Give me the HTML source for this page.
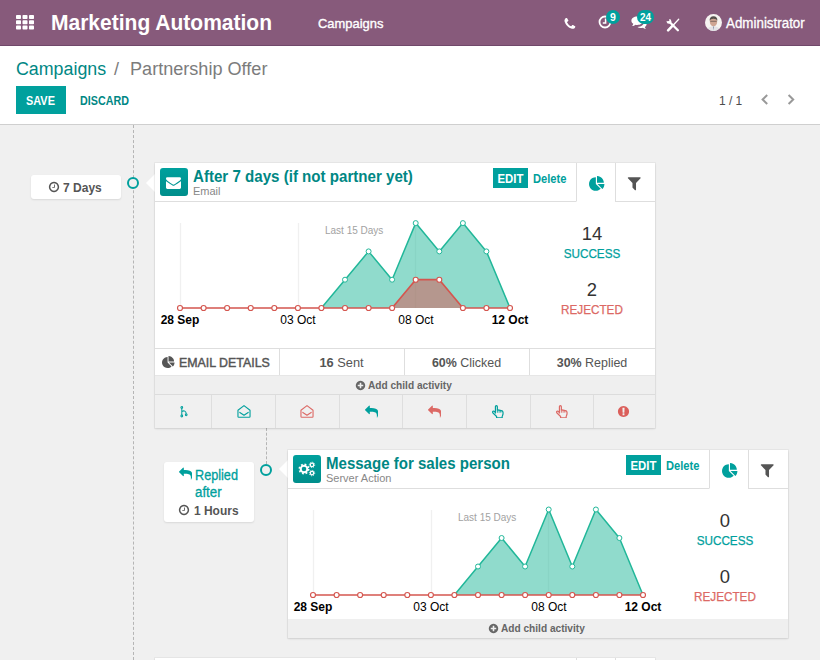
<!DOCTYPE html>
<html lang="en">
<head>
<meta charset="utf-8">
<title>Marketing Automation</title>
<style>
*{box-sizing:border-box;margin:0;padding:0}
html,body{width:820px;height:660px;overflow:hidden}
body{position:relative;background:#f0f0f0;font-family:"Liberation Sans",sans-serif;color:#4c4c4c;font-size:13px}
.abs{position:absolute}
.t{position:absolute;white-space:nowrap;line-height:1}
#nav{position:absolute;left:0;top:0;width:820px;height:46px;background:#875a7b;border-bottom:1px solid #70486a}
#cp{position:absolute;left:0;top:46px;width:820px;height:79px;background:#fff;border-bottom:1px solid #cfcfcf}
.card{position:absolute;background:#fff;box-shadow:0 0 0 1px rgba(0,0,0,.035),0 1px 2px rgba(0,0,0,.11)}
.hdr{position:absolute;left:0;top:0;height:39px;border-bottom:1px solid #dedede;background:#fff}
.ibox{position:absolute;left:5px;top:5px;width:28px;height:28px;border-radius:3px;background:linear-gradient(#00a09d,#008e8b)}
.tab{position:absolute;top:0;height:39px;border-left:1px solid #dedede;border-bottom:1px solid #dedede;background:#fff}
.tab.on{border-bottom-color:#fff}
.edit{position:absolute;background:#00a09d;height:20px}
.pill{position:absolute;background:#fff;border-radius:3px;box-shadow:0 1px 2px rgba(0,0,0,.10)}
.vdash{position:absolute;width:0;border-left:1px dashed #b5b5b5}
.dot{position:absolute;width:12px;height:12px;border-radius:50%;border:2px solid #00a09d;background:#f0f0f0}
.grey{background:#efefef}
.cell{position:absolute;top:0;height:100%;border-left:1px solid #dedede}
.badge{position:absolute;background:#00a09d;border-radius:7px;height:14px}
</style>
</head>
<body>

<div id="nav">
  <svg class="abs" style="left:16px;top:15px" width="18" height="15" viewBox="0 0 18 15"><g fill="#fff"><rect x="0" y="0" width="5" height="4" rx=".8"/><rect x="6.5" y="0" width="5" height="4" rx=".8"/><rect x="13" y="0" width="5" height="4" rx=".8"/><rect x="0" y="5.3" width="5" height="4" rx=".8"/><rect x="6.5" y="5.3" width="5" height="4" rx=".8"/><rect x="13" y="5.3" width="5" height="4" rx=".8"/><rect x="0" y="10.6" width="5" height="4" rx=".8"/><rect x="6.5" y="10.6" width="5" height="4" rx=".8"/><rect x="13" y="10.6" width="5" height="4" rx=".8"/></g></svg>
  <div class="t " id="brand" style="left:51px;top:12px;font-size:22px;color:#fff;font-weight:bold;transform:scaleX(0.955);transform-origin:0 50%">Marketing Automation</div>
  <div class="t " id="menu1" style="left:318px;top:16.5px;font-size:13px;color:#fff;transform:scaleX(0.995);transform-origin:0 50%;-webkit-text-stroke:.35px #fff">Campaigns</div>
  <svg class="abs" style="left:563px;top:16.5px" width="13.8" height="13.8" viewBox="0 0 1792 1792"><path fill="#fff" d="M1600 1240q0 27-10 70.500t-21 68.500q-21 50-122 106-94 51-186 51-27 0-52.500-3.500t-57.500-12.500-47.500-14.500-55.500-20.500-49-18q-98-35-175-83-128-79-264.500-215.500t-215.500-264.500q-48-77-83-175-3-9-18-49t-20.500-55.500-14.500-47.500-12.500-57.500-3.500-52.500q0-92 51-186 56-101 106-122 25-11 68.500-21t70.500-10q14 0 21 3 18 6 53 76 11 19 30 54t35 63.500 31 53.500q3 4 17.500 25t21.500 35.500 7 28.500q0 20-28.500 50t-62 55-62 53-28.500 46q0 9 5 22.500t8.500 20.500 14 24 11.500 19q76 137 174 235t235 174q2 1 19 11.500t24 14 20.500 8.500 22.500 5q18 0 46-28.500t53-62 55-62 50-28.500q14 0 28.500 7t35.500 21.500 25 17.500q25 15 53.500 31t63.500 35 54 30q70 35 76 53 3 7 3 21z"/></svg>
  <svg class="abs" style="left:598px;top:15px" width="14" height="14" viewBox="0 0 14 14"><circle cx="7" cy="7" r="5.500" fill="none" stroke="#fff" stroke-width="1.800"/><path d="M7.600 3.600V8.100H4.800" fill="none" stroke="#fff" stroke-width="1.500"/></svg>
  <div class="badge" style="left:606px;top:10px;width:14px"></div>
  <div class="t " id="b9" style="left:606px;top:12px;font-size:10.5px;color:#fff;font-weight:bold;width:14px;text-align:center">9</div>
  <svg class="abs" style="left:631px;top:16px" width="16" height="13" viewBox="0 0 16 13"><g fill="#fff"><path d="M6.200 0.500C9.600 0.500 12 2.300 12 4.700S9.600 8.900 6.200 8.900C5.600 8.900 5 8.800 4.500 8.700C3.600 9.500 2.400 10 1.100 10C1.700 9.400 2.100 8.700 2.300 7.800C1.100 7 0.400 5.900 0.400 4.700C0.400 2.300 2.800 0.500 6.200 0.500Z"/><path d="M13.200 5.200C14.600 5.900 15.600 7 15.600 8.300C15.600 9.400 14.900 10.400 13.800 11.100C14 11.800 14.400 12.400 14.900 12.900C13.700 12.900 12.600 12.500 11.800 11.800C11.300 11.900 10.800 12 10.200 12C8.700 12 7.400 11.600 6.500 10.900C10.500 10.800 13.300 8.400 13.200 5.200Z"/></g></svg>
  <div class="badge" style="left:637px;top:10px;width:17px"></div>
  <div class="t " id="b24" style="left:637px;top:12px;font-size:10.5px;color:#fff;font-weight:bold;width:17px;text-align:center;transform:scaleX(0.95);transform-origin:50% 50%">24</div>
  <svg class="abs" style="left:666px;top:18px" width="14" height="14" viewBox="0 0 14 14"><g stroke="#fff" fill="none"><path d="M3.800 4.300L11.900 12.200" stroke-width="2.300" stroke-linecap="round"/><path d="M12.700 1.300L7.600 6.700" stroke-width="1.300" stroke-linecap="round"/><path d="M7.100 7.200L2.100 12.300" stroke-width="2.500" stroke-linecap="round"/></g><circle cx="3" cy="3.400" r="2.400" fill="#fff"/><path d="M0 0L3.200 0.400L3.300 3.100L0.400 3.200Z" fill="#875a7b"/></svg>
  <svg class="abs" style="left:705px;top:14px" width="17" height="17" viewBox="0 0 17 17"><circle cx="8.500" cy="8.500" r="8.500" fill="#f6f3f1"/><path d="M2.800 14.800Q4 12.200 8.500 12.200Q13 12.200 14.200 14.800Q11.800 17 8.500 17Q5.200 17 2.800 14.800Z" fill="#e4e2e6"/><ellipse cx="8.500" cy="7.700" rx="3.700" ry="4.600" fill="#cfa593"/><path d="M4.600 6.800Q4.500 2.200 8.500 2.200Q12.500 2.200 12.400 6.800Q11.300 4.600 8.500 4.700Q5.700 4.600 4.600 6.800Z" fill="#56504c"/><path d="M5.300 7.300H11.700" stroke="#6b5a55" stroke-width=".8" fill="none"/><path d="M7.900 12.600L8.500 16.400L9.100 12.600Z" fill="#8a93a8"/></svg>
  <div class="t " id="adm" style="left:726px;top:16px;font-size:14px;color:#fff;transform:scaleX(0.955);transform-origin:0 50%;-webkit-text-stroke:.3px #fff">Administrator</div>
</div>
<div id="cp">
  <div class="t " id="bc1" style="left:16px;top:14px;font-size:18px;color:#008784;transform:scaleX(0.99);transform-origin:0 50%">Campaigns</div>
  <div class="t " id="bcs" style="left:114px;top:14px;font-size:18px;color:#7c7c7c">/</div>
  <div class="t " id="bc2" style="left:130px;top:14px;font-size:18px;color:#7c7c7c;transform:scaleX(1.005);transform-origin:0 50%">Partnership Offer</div>
  <div class="abs" style="left:16px;top:40px;width:50px;height:28px;background:#00a09d"></div>
  <div class="t " id="save" style="left:26px;top:49px;font-size:12px;color:#fff;font-weight:bold;transform:scaleX(0.91);transform-origin:0 50%">SAVE</div>
  <div class="t " id="disc" style="left:80px;top:49px;font-size:12px;color:#008784;font-weight:bold;transform:scaleX(0.895);transform-origin:0 50%">DISCARD</div>
  <div class="t " id="pager" style="left:719px;top:48px;font-size:13px;color:#4c4c4c;transform:scaleX(0.92);transform-origin:0 50%">1 / 1</div>
  <svg class="abs" style="left:761px;top:48px" width="8" height="11" viewBox="0 0 8 11"><path d="M6.200 1L1.600 5.500L6.200 10" fill="none" stroke="#999" stroke-width="2"/></svg><svg class="abs" style="left:787px;top:48px" width="8" height="11" viewBox="0 0 8 11"><path d="M1.600 1L6.200 5.500L1.600 10" fill="none" stroke="#999" stroke-width="2"/></svg>
</div>

<div class="vdash" style="left:133px;top:125px;height:535px"></div>
<div class="vdash" style="left:266px;top:428px;height:36px"></div>

<div class="pill" style="left:31px;top:175px;width:90px;height:24px"></div>
<svg class="abs" style="left:48px;top:181px" width="12" height="12" viewBox="0 0 1792 1792"><path fill="#555" d="M1024 544v448q0 14-9 23t-23 9h-320q-14 0-23-9t-9-23v-64q0-14 9-23t23-9h224v-352q0-14 9-23t23-9h64q14 0 23 9t9 23zm416 352q0-148-73-273t-198-198-273-73-273 73-198 198-73 273 73 273 198 198 273 73 273-73 198-198 73-273zm224 0q0 209-103 385.500t-279.500 279.500-385.500 103-385.500-103-279.500-279.500-103-385.500 103-385.500 279.500-279.500 385.500-103 385.500 103 279.500 279.500 103 385.500z"/></svg>
<div class="t " id="d7" style="left:63px;top:181px;font-size:13px;color:#555;font-weight:bold;transform:scaleX(0.925);transform-origin:0 50%">7 Days</div>
<div class="dot" style="left:127px;top:177px"></div>
<svg class="abs" style="left:146px;top:173px" width="10" height="20" viewBox="0 0 10 20"><path d="M10 0L0 10L10 20Z" fill="#fff"/></svg>

<div class="card" id="c1" style="left:155px;top:163px;width:500px;height:265px">

  <div class="hdr" style="width:421px"></div>
  <div class="ibox"><svg class="abs" style="left:6px;top:6.7px" width="15" height="15" viewBox="0 0 1792 1792"><path fill="#fff" d="M1792 710v794q0 66-47 113t-113 47h-1472q-66 0-113-47t-47-113v-794q44 49 101 87 362 246 497 345 57 42 92.500 65.500t94.500 48 110 24.500h2q51 0 110-24.500t94.500-48 92.500-65.500q170-123 498-345 57-39 100-87zm0-294q0 79-49 151t-122 123q-376 261-468 325-10 7-42.500 30.500t-54 38-52 32.500-57.500 27-50 9h-2q-23 0-50-9t-57.500-27-52-32.500-54-38-42.500-30.500q-91-64-262-182.500t-205-142.500q-62-42-117-115.500t-55-136.500q0-78 41.500-130t118.500-52h1472q65 0 112.500 47t47.500 113z"/></svg></div>
  <div class="t ttl" style="left:38px;top:6px;font-size:16px;color:#008784;font-weight:bold;transform:scaleX(0.944);transform-origin:0 50%">After 7 days (if not partner yet)</div>
  <div class="t sub" style="left:38px;top:23px;font-size:11px;color:#888">Email</div>
  <div class="edit" style="left:338px;top:5px;width:35px"></div>
  <div class="t ed" style="left:338px;top:10px;font-size:12px;color:#fff;font-weight:bold;width:35px;text-align:center;transform:scaleX(0.95);transform-origin:50% 50%">EDIT</div>
  <div class="t del" style="left:378px;top:10px;font-size:12px;color:#00a09d;font-weight:bold;transform:scaleX(0.93);transform-origin:0 50%">Delete</div>
  <div class="tab on" style="left:421px;width:40px"><svg class="abs" style="left:11.8px;top:12.7px" width="16" height="16" viewBox="0 0 1792 1792"><path fill="#00a09d" d="M768 890l546 546q-106 108-247.500 168t-298.500 60q-209 0-385.500-103t-279.500-279.500-103-385.500 103-385.500 279.500-279.500 385.500-103v762zm187 6h773q0 157-60 298.500t-168 247.500zm709-128h-768v-768q209 0 385.500 103t279.500 279.500 103 385.500z"/></svg></div>
  <div class="tab" style="left:460px;width:40px"><svg class="abs" style="left:10px;top:12px" width="16.5" height="16.5" viewBox="0 0 1792 1792"><path fill="#555" d="M1595 295q17 41-14 70l-493 493v742q0 42-39 59-13 5-25 5-27 0-45-19l-256-256q-19-19-19-45v-486l-493-493q-31-29-14-70 17-39 59-39h1280q42 0 59 39z"/></svg></div>
  <svg class="abs" style="left:0;top:0" width="400" height="186" viewBox="0 0 400 186">
    <g stroke="#f0f0f0" stroke-width="1.300"><line x1="25.500" y1="60" x2="25.500" y2="145"/><line x1="143.500" y1="60" x2="143.500" y2="145"/><line x1="260.500" y1="60" x2="260.500" y2="145"/></g>
    <polygon points="25,145 166.400,145 190,116.700 213.600,88.400 237.100,116.700 260.700,60.100 284.300,88.400 307.900,60.100 331.400,88.400 355,145" fill="#21b799" fill-opacity=".5"/>
<polyline points="166.400,145 190,116.700 213.600,88.400 237.100,116.700 260.700,60.100 284.300,88.400 307.900,60.100 331.400,88.400 355,145" fill="none" stroke="#21b799" stroke-width="1.500" stroke-linejoin="round"/>
<polygon points="237.100,145 260.700,116.700 284.300,116.700 307.900,145" fill="#d9534f" fill-opacity=".5"/>
<polyline points="25,145 237.100,145 260.700,116.700 284.300,116.700 307.900,145 355,145" fill="none" stroke="#d4564f" stroke-width="1.700" stroke-linejoin="round"/>
<g fill="#fff" stroke="#21b799" stroke-width="1"><circle cx="190" cy="116.700" r="2.500"/><circle cx="213.600" cy="88.400" r="2.500"/><circle cx="237.100" cy="116.700" r="2.500"/><circle cx="260.700" cy="60.100" r="2.500"/><circle cx="284.300" cy="88.400" r="2.500"/><circle cx="307.900" cy="60.100" r="2.500"/><circle cx="331.400" cy="88.400" r="2.500"/></g>
<g fill="#fff" stroke="#d4564f" stroke-width="1.150"><circle cx="25.0" cy="145" r="2.500"/><circle cx="48.6" cy="145" r="2.500"/><circle cx="72.1" cy="145" r="2.500"/><circle cx="95.7" cy="145" r="2.500"/><circle cx="119.3" cy="145" r="2.500"/><circle cx="142.9" cy="145" r="2.500"/><circle cx="166.4" cy="145" r="2.500"/><circle cx="190.0" cy="145" r="2.500"/><circle cx="213.6" cy="145" r="2.500"/><circle cx="237.1" cy="145" r="2.500"/><circle cx="260.7" cy="116.7" r="2.500"/><circle cx="284.3" cy="116.7" r="2.500"/><circle cx="307.9" cy="145" r="2.500"/><circle cx="331.4" cy="145" r="2.500"/><circle cx="355.0" cy="145" r="2.500"/></g>
    <text x="170" y="71" font-family="Liberation Sans, sans-serif" font-size="10" fill="#a2a2a2">Last 15 Days</text>
    <g font-family="Liberation Sans, sans-serif" font-size="12" fill="#000">
      <text x="25" y="161" text-anchor="middle" font-weight="bold">28 Sep</text>
      <text x="143" y="161" text-anchor="middle">03 Oct</text>
      <text x="261" y="161" text-anchor="middle">08 Oct</text>
      <text x="355" y="161" text-anchor="middle" font-weight="bold">12 Oct</text>
    </g>
  </svg>
  <div class="t num" style="left:387px;top:61px;font-size:19px;color:#333;width:100px;text-align:center;transform:scaleX(0.97);transform-origin:50% 50%">14</div>
  <div class="t lab" style="left:387px;top:84px;font-size:13px;color:#00a09d;width:100px;text-align:center;transform:scaleX(0.9);transform-origin:50% 50%;-webkit-text-stroke:.25px #00a09d">SUCCESS</div>
  <div class="t num" style="left:387px;top:117px;font-size:19px;color:#333;width:100px;text-align:center;transform:scaleX(0.97);transform-origin:50% 50%">2</div>
  <div class="t lab" style="left:387px;top:140px;font-size:13px;color:#dc6965;width:100px;text-align:center;transform:scaleX(0.9);transform-origin:50% 50%;-webkit-text-stroke:.25px #dc6965">REJECTED</div>

  <div class="abs" style="left:0;top:185px;width:500px;height:28px;border-top:1px solid #dedede;border-bottom:1px solid #e6e6e6">
    <div class="cell" style="left:124px"></div><div class="cell" style="left:249px"></div><div class="cell" style="left:374px"></div>
    <svg class="abs" style="left:7.3px;top:6.8px" width="13" height="13" viewBox="0 0 1792 1792"><path fill="#555" d="M768 890l546 546q-106 108-247.500 168t-298.500 60q-209 0-385.500-103t-279.500-279.500-103-385.500 103-385.500 279.500-279.500 385.500-103v762zm187 6h773q0 157-60 298.500t-168 247.500zm709-128h-768v-768q209 0 385.500 103t279.500 279.500 103 385.500z"/></svg>
    <div class="t " id="ed" style="left:24px;top:7px;font-size:13px;color:#555;transform:scaleX(0.952);transform-origin:0 50%;-webkit-text-stroke:.45px #555">EMAIL DETAILS</div>
    <div class="t st" style="left:124px;top:7px;font-size:13px;color:#555;width:125px;text-align:center;transform:scaleX(0.985);transform-origin:50% 50%"><b>16</b> Sent</div>
    <div class="t st" style="left:249px;top:7px;font-size:13px;color:#555;width:125px;text-align:center;transform:scaleX(0.957);transform-origin:50% 50%"><b>60%</b> Clicked</div>
    <div class="t st" style="left:374px;top:7px;font-size:13px;color:#555;width:126px;text-align:center;transform:scaleX(0.957);transform-origin:50% 50%"><b>30%</b> Replied</div>
  </div>
  <div class="abs grey" style="left:0;top:213px;width:500px;height:19px">
    <svg class="abs" style="left:200px;top:4px" width="11" height="11" viewBox="0 0 1792 1792"><path fill="#666" d="M1344 960v-128q0-26-19-45t-45-19h-256v-256q0-26-19-45t-45-19h-128q-26 0-45 19t-19 45v256h-256q-26 0-45 19t-19 45v128q0 26 19 45t45 19h256v256q0 26 19 45t45 19h128q26 0 45-19t19-45v-256h256q26 0 45-19t19-45zm320-64q0 209-103 385.500t-279.500 279.500-385.500 103-385.500-103-279.500-279.500-103-385.500 103-385.500 279.500-279.500 385.500-103 385.500 103 279.500 279.500 103 385.500z"/></svg>
    <div class="t add" style="left:213px;top:4px;font-size:11px;color:#666;font-weight:bold;transform:scaleX(0.92);transform-origin:0 50%">Add child activity</div>
  </div>
  <div class="abs" style="left:0;top:231px;width:500px;height:34px;background:#f0f0f0;border-top:1px solid #dcdcdc">
    <div class="cell" style="left:56px"></div><div class="cell" style="left:120px"></div><div class="cell" style="left:184px"></div><div class="cell" style="left:247px"></div><div class="cell" style="left:311px"></div><div class="cell" style="left:375px"></div><div class="cell" style="left:438px"></div>
    <svg class="abs" style="left:24.5px;top:11px" width="8" height="11.500" viewBox="0 0 9 13"><g fill="none" stroke="#00a09d" stroke-width="1.150"><circle cx="2" cy="1.700" r="1"/><circle cx="2" cy="11.300" r="1"/><circle cx="7" cy="10" r="1"/><path d="M2 2.700V10.300M2 6.300C4.500 4.600 7 5.800 7 9"/></g></svg>
    <svg class="abs" style="left:81.7px;top:9.8px" width="14" height="13" viewBox="0 0 15 14"><g fill="none" stroke="#00a09d" stroke-width="1.200" stroke-linejoin="round"><path d="M1 5.600L7.500 0.700L14 5.600V12.400Q14 13.200 13.200 13.200H1.800Q1 13.200 1 12.400Z"/><path d="M3 8L7.500 11L12 8" stroke-linecap="round"/></g></svg>
    <svg class="abs" style="left:145.3px;top:9.8px" width="14" height="13" viewBox="0 0 15 14"><g fill="none" stroke="#dc6965" stroke-width="1.200" stroke-linejoin="round"><path d="M1 5.600L7.500 0.700L14 5.600V12.400Q14 13.200 13.200 13.200H1.800Q1 13.200 1 12.400Z"/><path d="M3 8L7.500 11L12 8" stroke-linecap="round"/></g></svg>
    <svg class="abs" style="left:209.5px;top:9.8px" width="13.5" height="13.5" viewBox="0 0 1792 1792"><path fill="#00a09d" d="M1792 1120q0 166-127 451-3 7-10.500 24t-13.500 30-13 22q-12 17-28 17-15 0-23.500-10t-8.500-25q0-9 2.500-26.500t2.500-23.500q5-68 5-123 0-101-17.500-181t-48.500-138.500-80-101-105.500-69.500-133-42.500-154-21.500-175.500-6h-224v256q0 26-19 45t-45 19-45-19l-512-512q-19-19-19-45t19-45l512-512q19-19 45-19t45 19 19 45v256h224q713 0 875 403 53 134 53 333z"/></svg>
    <svg class="abs" style="left:272.7px;top:9.8px" width="13.5" height="13.5" viewBox="0 0 1792 1792"><path fill="#dc6965" d="M1792 1120q0 166-127 451-3 7-10.500 24t-13.500 30-13 22q-12 17-28 17-15 0-23.500-10t-8.500-25q0-9 2.500-26.500t2.500-23.500q5-68 5-123 0-101-17.500-181t-48.500-138.500-80-101-105.500-69.500-133-42.500-154-21.500-175.500-6h-224v256q0 26-19 45t-45 19-45-19l-512-512q-19-19-19-45t19-45l512-512q19-19 45-19t45 19 19 45v256h224q713 0 875 403 53 134 53 333z"/></svg>
    <svg class="abs" style="left:336px;top:9.5px" width="13.500" height="13.500" viewBox="0 0 14 14"><g fill="none" stroke="#00a09d" stroke-width="1.250" stroke-linejoin="round" stroke-linecap="round"><path d="M4.600 8.300V1.800Q4.600 0.700 5.600 0.700Q6.600 0.700 6.600 1.800V5.200Q7.600 4.600 8.400 5.500Q9.400 5 10.200 6Q11.600 5.700 12.300 7Q12.700 8.500 12.300 10.200L11.600 11.800V13.300H5.800V11.900L2.100 8.300Q1.200 7.200 2.100 6.500Q3 6 3.800 6.900Z"/><path d="M6.600 5.200V7.600M8.400 5.600V7.600M10.200 6.200V7.600" stroke-width=".9"/></g></svg>
    <svg class="abs" style="left:399.5px;top:9.5px" width="13.500" height="13.500" viewBox="0 0 14 14"><g fill="none" stroke="#dc6965" stroke-width="1.250" stroke-linejoin="round" stroke-linecap="round"><path d="M4.600 8.300V1.800Q4.600 0.700 5.600 0.700Q6.600 0.700 6.600 1.800V5.200Q7.600 4.600 8.400 5.500Q9.400 5 10.200 6Q11.600 5.700 12.300 7Q12.700 8.500 12.300 10.200L11.600 11.800V13.300H5.800V11.900L2.100 8.300Q1.200 7.200 2.100 6.500Q3 6 3.800 6.900Z"/><path d="M6.600 5.200V7.600M8.400 5.600V7.600M10.200 6.200V7.600" stroke-width=".9"/></g></svg>
    <svg class="abs" style="left:462.3px;top:9.8px" width="13" height="13" viewBox="0 0 1792 1792"><path fill="#db5f5b" d="M896 128q209 0 385.500 103t279.500 279.500 103 385.500-103 385.500-279.500 279.500-385.500 103-385.500-103-279.500-279.500-103-385.500 103-385.500 279.500-279.500 385.500-103zm128 1247v-190q0-14-9-23.500t-22-9.500h-192q-13 0-23 10t-10 23v190q0 13 10 23t23 10h192q13 0 22-9.500t9-23.500zm-2-344l18-621q0-12-10-18-10-8-24-8h-220q-14 0-24 8-10 6-10 18l17 621q0 10 10 17.500t24 7.500h185q14 0 23.500-7.500t10.500-17.500z"/></svg>
  </div>
</div>

<div class="pill" style="left:164px;top:462px;width:90px;height:60px"></div>
<svg class="abs" style="left:178.5px;top:466.8px" width="13.5" height="13.5" viewBox="0 0 1792 1792"><path fill="#00a09d" d="M1792 1120q0 166-127 451-3 7-10.500 24t-13.500 30-13 22q-12 17-28 17-15 0-23.500-10t-8.500-25q0-9 2.500-26.500t2.500-23.500q5-68 5-123 0-101-17.500-181t-48.500-138.500-80-101-105.500-69.500-133-42.500-154-21.500-175.500-6h-224v256q0 26-19 45t-45 19-45-19l-512-512q-19-19-19-45t19-45l512-512q19-19 45-19t45 19 19 45v256h224q713 0 875 403 53 134 53 333z"/></svg>
<div class="t " id="rp" style="left:195px;top:468px;font-size:14px;color:#00a09d;transform:scaleX(0.905);transform-origin:0 50%;-webkit-text-stroke:.3px #00a09d">Replied</div>
<div class="t " id="af" style="left:195px;top:485px;font-size:14px;color:#00a09d;transform:scaleX(0.95);transform-origin:0 50%;-webkit-text-stroke:.3px #00a09d">after</div>
<svg class="abs" style="left:178px;top:504px" width="12" height="12" viewBox="0 0 1792 1792"><path fill="#555" d="M1024 544v448q0 14-9 23t-23 9h-320q-14 0-23-9t-9-23v-64q0-14 9-23t23-9h224v-352q0-14 9-23t23-9h64q14 0 23 9t9 23zm416 352q0-148-73-273t-198-198-273-73-273 73-198 198-73 273 73 273 198 198 273 73 273-73 198-198 73-273zm224 0q0 209-103 385.500t-279.500 279.500-385.500 103-385.500-103-279.500-279.500-103-385.500 103-385.500 279.500-279.500 385.500-103 385.500 103 279.500 279.500 103 385.500z"/></svg>
<div class="t " id="h1" style="left:194px;top:504px;font-size:13px;color:#555;font-weight:bold;transform:scaleX(0.92);transform-origin:0 50%">1 Hours</div>
<div class="dot" style="left:260px;top:464px"></div>
<svg class="abs" style="left:279px;top:459px" width="10" height="20" viewBox="0 0 10 20"><path d="M10 0L0 10L10 20Z" fill="#fff"/></svg>

<div class="card" id="c2" style="left:288px;top:450px;width:500px;height:188px">

  <div class="hdr" style="width:421px"></div>
  <div class="ibox"><svg class="abs" style="left:5px;top:6px" width="18" height="16" viewBox="0 0 18 16"><g fill="none" stroke="#fff"><circle cx="6" cy="8" r="3.300" stroke-width="2"/><circle cx="6" cy="8" r="4.700" stroke-width="1.600" stroke-dasharray="1.850 1.840"/><circle cx="14" cy="3.900" r="1.700" stroke-width="1.300"/><circle cx="14" cy="3.900" r="2.700" stroke-width="1" stroke-dasharray="1.060 1.060"/><circle cx="14" cy="12.100" r="1.700" stroke-width="1.300"/><circle cx="14" cy="12.100" r="2.700" stroke-width="1" stroke-dasharray="1.060 1.060"/></g></svg></div>
  <div class="t ttl" style="left:38px;top:6px;font-size:16px;color:#008784;font-weight:bold;transform:scaleX(0.94);transform-origin:0 50%">Message for sales person</div>
  <div class="t sub" style="left:38px;top:23px;font-size:11px;color:#888">Server Action</div>
  <div class="edit" style="left:338px;top:5px;width:35px"></div>
  <div class="t ed" style="left:338px;top:10px;font-size:12px;color:#fff;font-weight:bold;width:35px;text-align:center;transform:scaleX(0.95);transform-origin:50% 50%">EDIT</div>
  <div class="t del" style="left:378px;top:10px;font-size:12px;color:#00a09d;font-weight:bold;transform:scaleX(0.93);transform-origin:0 50%">Delete</div>
  <div class="tab on" style="left:421px;width:40px"><svg class="abs" style="left:11.8px;top:12.7px" width="16" height="16" viewBox="0 0 1792 1792"><path fill="#00a09d" d="M768 890l546 546q-106 108-247.500 168t-298.500 60q-209 0-385.500-103t-279.500-279.500-103-385.500 103-385.500 279.500-279.500 385.500-103v762zm187 6h773q0 157-60 298.500t-168 247.500zm709-128h-768v-768q209 0 385.500 103t279.500 279.500 103 385.500z"/></svg></div>
  <div class="tab" style="left:460px;width:40px"><svg class="abs" style="left:10px;top:12px" width="16.5" height="16.5" viewBox="0 0 1792 1792"><path fill="#555" d="M1595 295q17 41-14 70l-493 493v742q0 42-39 59-13 5-25 5-27 0-45-19l-256-256q-19-19-19-45v-486l-493-493q-31-29-14-70 17-39 59-39h1280q42 0 59 39z"/></svg></div>
  <svg class="abs" style="left:0;top:0" width="400" height="186" viewBox="0 0 400 186">
    <g stroke="#f0f0f0" stroke-width="1.300"><line x1="25.500" y1="60" x2="25.500" y2="145"/><line x1="143.500" y1="60" x2="143.500" y2="145"/><line x1="260.500" y1="60" x2="260.500" y2="145"/></g>
    <polygon points="25,145 166.400,145 190,116.500 213.600,88 237.100,116.500 260.700,59.500 284.300,116.500 307.900,59.500 331.400,88 355,145" fill="#21b799" fill-opacity=".5"/>
<polyline points="166.400,145 190,116.500 213.600,88 237.100,116.500 260.700,59.500 284.300,116.500 307.900,59.500 331.400,88 355,145" fill="none" stroke="#21b799" stroke-width="1.500" stroke-linejoin="round"/>
<polyline points="25,145 355,145" fill="none" stroke="#d4564f" stroke-width="1.700"/>
<g fill="#fff" stroke="#21b799" stroke-width="1"><circle cx="190" cy="116.500" r="2.500"/><circle cx="213.600" cy="88" r="2.500"/><circle cx="237.100" cy="116.500" r="2.500"/><circle cx="260.700" cy="59.500" r="2.500"/><circle cx="284.300" cy="116.500" r="2.500"/><circle cx="307.900" cy="59.500" r="2.500"/><circle cx="331.400" cy="88" r="2.500"/></g>
<g fill="#fff" stroke="#d4564f" stroke-width="1.150"><circle cx="25.0" cy="145" r="2.500"/><circle cx="48.6" cy="145" r="2.500"/><circle cx="72.1" cy="145" r="2.500"/><circle cx="95.7" cy="145" r="2.500"/><circle cx="119.3" cy="145" r="2.500"/><circle cx="142.9" cy="145" r="2.500"/><circle cx="166.4" cy="145" r="2.500"/><circle cx="190.0" cy="145" r="2.500"/><circle cx="213.6" cy="145" r="2.500"/><circle cx="237.1" cy="145" r="2.500"/><circle cx="260.7" cy="145" r="2.500"/><circle cx="284.3" cy="145" r="2.500"/><circle cx="307.9" cy="145" r="2.500"/><circle cx="331.4" cy="145" r="2.500"/><circle cx="355.0" cy="145" r="2.500"/></g>
    <text x="170" y="71" font-family="Liberation Sans, sans-serif" font-size="10" fill="#a2a2a2">Last 15 Days</text>
    <g font-family="Liberation Sans, sans-serif" font-size="12" fill="#000">
      <text x="25" y="161" text-anchor="middle" font-weight="bold">28 Sep</text>
      <text x="143" y="161" text-anchor="middle">03 Oct</text>
      <text x="261" y="161" text-anchor="middle">08 Oct</text>
      <text x="355" y="161" text-anchor="middle" font-weight="bold">12 Oct</text>
    </g>
  </svg>
  <div class="t num" style="left:387px;top:61px;font-size:19px;color:#333;width:100px;text-align:center;transform:scaleX(0.97);transform-origin:50% 50%">0</div>
  <div class="t lab" style="left:387px;top:84px;font-size:13px;color:#00a09d;width:100px;text-align:center;transform:scaleX(0.9);transform-origin:50% 50%;-webkit-text-stroke:.25px #00a09d">SUCCESS</div>
  <div class="t num" style="left:387px;top:117px;font-size:19px;color:#333;width:100px;text-align:center;transform:scaleX(0.97);transform-origin:50% 50%">0</div>
  <div class="t lab" style="left:387px;top:140px;font-size:13px;color:#dc6965;width:100px;text-align:center;transform:scaleX(0.9);transform-origin:50% 50%;-webkit-text-stroke:.25px #dc6965">REJECTED</div>

  <div class="abs grey" style="left:0;top:169px;width:500px;height:19px">
    <svg class="abs" style="left:200px;top:4px" width="11" height="11" viewBox="0 0 1792 1792"><path fill="#666" d="M1344 960v-128q0-26-19-45t-45-19h-256v-256q0-26-19-45t-45-19h-128q-26 0-45 19t-19 45v256h-256q-26 0-45 19t-19 45v128q0 26 19 45t45 19h256v256q0 26 19 45t45 19h128q26 0 45-19t19-45v-256h256q26 0 45-19t19-45zm320-64q0 209-103 385.500t-279.500 279.500-385.500 103-385.500-103-279.500-279.500-103-385.500 103-385.500 279.500-279.500 385.500-103 385.500 103 279.500 279.500 103 385.500z"/></svg>
    <div class="t add" style="left:213px;top:4px;font-size:11px;color:#666;font-weight:bold;transform:scaleX(0.92);transform-origin:0 50%">Add child activity</div>
  </div>
</div>

<div class="card" style="left:155px;top:658px;width:500px;height:40px"><div class="tab on" style="left:421px;width:40px"></div><div class="tab" style="left:460px;width:40px"></div></div>

</body>
</html>
